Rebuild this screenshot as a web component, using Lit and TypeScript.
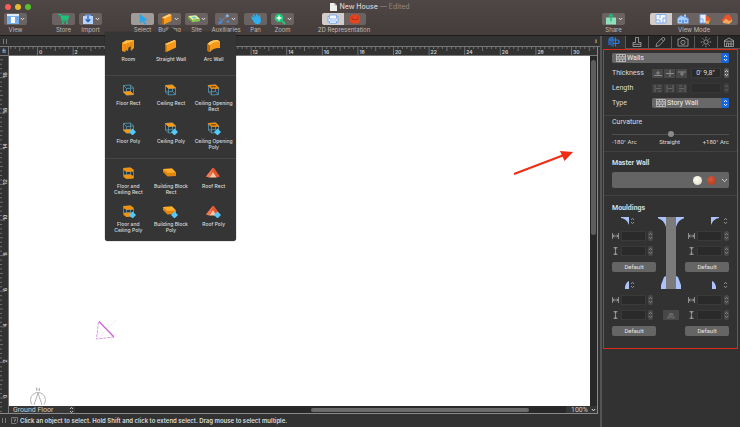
import { LitElement, html, svg, css, TemplateResult } from "lit";
import { customElement, state } from "lit/decorators.js";
import { classMap } from "lit/directives/class-map.js";

const icon = (w: number, h: number, body: unknown, cls = "") =>
  html`<svg class=${cls} width=${w} height=${h} viewBox="0 0 ${w} ${h}" fill="none" aria-hidden="true">${body}</svg>`;

const TOP = "M1 1.5L8 1L11 4L4 4.5Z";
const BOTTOM = "M1 8L8 7.5L11 10.5L4 11Z";
const wire = svg`<path d="M1 1.5L8 1L11 4L4 4.5Z M1 8L8 7.5L11 10.5L4 11Z M1 1.5V8 M8 1V7.5 M11 4V10.5 M4 4.5V11" stroke="#559db9" stroke-width=".8"/>`;
const diamond = svg`<path d="M11.5 7.5L15 11L11.5 14.5L8 11Z" fill="#55c8fa"/>`;

const glyphs: Record<string, unknown> = {
  room: svg`<path d="M1 4L5 1.5L13 1V9L10 12V7L7 9V12L5 11L4 13L1 12Z" fill="#f39412"/><path d="M1 4L5 1.5L13 1L10 3L7 4L4 5Z" fill="#ffc04d"/><path d="M4 5V12.5M7 4V11M10 3V11" stroke="#cf7d12" stroke-width=".8"/>`,
  straight: svg`<path d="M2 5L11.5 1L13 2V8.5L3.5 13L2 12Z" fill="#f8981a"/><path d="M2 5L11.5 1L13 2L3.5 6Z" fill="#ffc861"/><path d="M2 5L3.5 6V13L2 12Z" fill="#b4670b"/>`,
  arc: svg`<path d="M1.5 5Q5 .8 11.5 1L14 2.5V9Q7.5 8.5 4 13L1.5 12Z" fill="#f8981a"/><path d="M1.5 5Q5 .8 11.5 1L14 2.5Q7.5 2 4 6.5Z" fill="#ffc861"/><path d="M1.5 5L4 6.5V13L1.5 12Z" fill="#c06f0d"/>`,
  floor: svg`${wire}<path d=${BOTTOM} fill="#f59a16" stroke="#f59a16" stroke-width=".6"/>`,
  ceiling: svg`${wire}<path d=${TOP} fill="#f59a16" stroke="#f59a16" stroke-width=".6"/>`,
  opening: svg`${wire}<path d="M1.5 1.7L8 1.2L10.5 3.8L4 4.3Z" stroke="#f28d10" stroke-width="1.5" fill="#623d12"/>`,
  both: svg`${wire}<path d="M1 1L8 .5L11 2.5V4.5L4 5L1 3Z M1 8L8 7.5L11 9V11.5L4 12L1 10Z" fill="#f0920f"/>`,
  block: svg`<path d="M0 3L9 2.5L13 6.5V10L4.5 10.5L0 6Z" fill="#e0850d"/><path d="M0 3L9 2.5L13 6.5L4.5 7Z" fill="#ffae2c"/>`,
  roof: svg`<path d="M0 10.5L6.5 2L8 2L14 10.5L10.5 11.5L7 7L3.5 11.5Z" fill="#e2532e"/><path d="M7 2L3.5 11.5L0 10.5Z" fill="#f47a50"/><path d="M3.5 11.5L7 6L10.5 11.5Z" fill="#ffc7a5"/>`,
};
const solid = ["room", "straight", "arc", "block", "roof"];

const brick = icon(10, 8, svg`<path d="M.5 .5H9.5V7.5H.5Z M.5 2.8H9.5 M.5 5.2H9.5 M3.5 .5V2.8 M6.5 .5V2.8 M2 2.8V5.2 M5 2.8V5.2 M8 2.8V5.2 M3.5 5.2V7.5 M6.5 5.2V7.5" stroke="#d2d2d2" stroke-width=".7"/>`);
const updown = icon(5, 8, svg`<path d="M1 3L2.5 1.3L4 3M1 5L2.5 6.7L4 5" stroke="currentColor" stroke-width=".9"/>`);
const chevron = icon(5, 4, svg`<path d="M.8 1L2.5 2.8L4.2 1" stroke="#e4e2e1" stroke-width="1"/>`);
const grip = icon(4, 5, svg`<path d="M.5 0V5M3.5 0V5" stroke="#8c8c8c" stroke-width=".8"/>`);

const tools: Record<string, unknown> = {
  view: svg`<path d="M1 1H13V11H1Z" fill="#79b0ec"/><path d="M1 1H13V3H1Z" fill="#d9ecff"/><path d="M5 4H9V10H5Z" fill="#fff"/><path d="M2 4.5H4M10 4.5H12M2 6.5H4M10 6.5H12" stroke="#5c9bdf" stroke-width=".8"/>`,
  store: svg`<path d="M1 1.5H3.5L5.5 8H11" stroke="#1fc07c" stroke-width="1.2"/><path d="M3.5 2.5H12.5L11 7.3H5Z" fill="#1fc07c"/><circle cx="6" cy="10" r="1.1" fill="#1fc07c"/><circle cx="10" cy="10" r="1.1" fill="#1fc07c"/>`,
  import: svg`<path d="M2 3H12V11H2Z" fill="#b9d5fb"/><path d="M4 1.5H10V3H4Z" fill="#6fa4ee"/><path d="M7 2.5V8.5M4.7 6.3L7 8.7L9.3 6.3" stroke="#2a62c4" stroke-width="1.3"/>`,
  select: svg`<path d="M3.5 .8L12 7.2L8.2 7.5L10 11L8.3 11.6L6.6 8.3L3.8 10.5Z" fill="#2ba5ea"/>`,
  building: svg`<path d="M2 4.5L9.5 1L11.5 2.2V8L4 11.5L2 10.3Z" fill="#f59a1c"/><path d="M2 4.5L9.5 1L11.5 2.2L4 5.7Z" fill="#ffd078"/><path d="M2 4.5L4 5.7V11.5L2 10.3Z" fill="#b8690d"/>`,
  site: svg`<path d="M1 3L9 2.3L13 6L5 7Z" fill="#eff1a0"/><path d="M1 3L5 7V9.3L1 5.2Z" fill="#6fa83b"/><path d="M5 7L13 6V8.3L5 9.3Z" fill="#86c94c"/><path d="M4 4L8 3.6L10 5.5L6.5 5.8Z" fill="#65ccd1"/>`,
  aux: svg`<path d="M2.5 10L10.5 2.5M3 5L5.5 9.5" stroke="#5a95dc" stroke-width="1.1" stroke-dasharray="1.6 .8"/><circle cx="10.3" cy="2.7" r="1.5" fill="#86b8f2"/><circle cx="3" cy="9.5" r="1.6" fill="#4a8be0"/><circle cx="11" cy="8.5" r="1.3" fill="#4a8be0"/>`,
  pan: svg`<path d="M2 4L3.2 3.3L5.5 5.2L3.8 1.8L5 1.2L7.2 4.2L6.7 1L8 .8L9.3 4.2L9.8 2L11 2.2L12 8Q11.5 11 8.5 11.3Q5.5 11 4.5 8.5Z" fill="#2fb0ee"/>`,
  zoom: svg`<circle cx="6" cy="5" r="4.3" fill="#1fca78"/><path d="M9 8L12 11" stroke="#1fca78" stroke-width="1.8"/><path d="M6 2.6V7.4M3.6 5H8.4" stroke="#fff" stroke-width="1.3"/>`,
  chairBlue: svg`<path d="M3.5 2H10.5V3.5H12V9H10.5V10.3H3.5V9H2V3.5H3.5Z" fill="#f4f8ff" stroke="#7fabf0" stroke-width="1"/><path d="M3.5 4V6H10.5V4M3.5 10V8H10.5V10" stroke="#7fabf0" stroke-width=".8"/>`,
  chairRed: svg`<path d="M3.5 1.5H10.5V3H12V9.5H10.5V10.5H3.5V9.5H2V3H3.5Z" fill="#e5441f"/><path d="M4 3.5V6.5H10V3.5" stroke="#a82f14" stroke-width=".8"/>`,
  share: svg`<path d="M2 4.5H12V11.5H2Z" fill="#8fe0bd"/><path d="M7 8.5V1.5M4.8 3.6L7 1.3L9.2 3.6" stroke="#1fb877" stroke-width="1.4"/>`,
  plan: svg`<path d="M2 1.5H12V10H2Z M6 1.5V5M2 7H6V10M9 10V5H12" fill="#f3f8ff" stroke="#84aff0" stroke-width="1"/>`,
  house: svg`<path d="M1.5 5.5L5 2.5L8 3.5V1.5H10V4L12.5 5.5V10.5H1.5Z" fill="#a8cdfb"/><path d="M1.5 5.5L5 2.5L12.5 5.5" stroke="#5f99e8"/><path d="M3 7H5V9H3ZM9 7H11V9H9ZM6 7H8V10.5H6Z" fill="#5f99e8"/>`,
  split: svg`<path d="M2 1.5H8V10H2Z M2 6H5V10" fill="#e3efff" stroke="#76a8f0" stroke-width="1"/><path d="M8 2L13 6L10 10H8Z" fill="#e8592a"/><path d="M8 8L12 7.5L10.5 11L8 10.8Z" fill="#f3a34e"/>`,
  model: svg`<path d="M1.5 7L6 2L9.5 1.5L12.5 6.5L9 8L6 5.5L3 9Z" fill="#e9542a"/><path d="M3 8.5L6 5.5L9 8L12 6.8V8.5L9 11L3 10Z" fill="#f7a756"/>`,
};

const tabs: [string, unknown][] = [
  ["Element", svg`<path d="M2 9V4Q2 1.5 6 1.5V10.5M4 2.5V9.5M8.5 1.5V10.5M2 4H11L12.5 6L11 7.5H6" stroke="#2a7de8" stroke-width="1.1"/>`],
  ["Material", svg`<path d="M5.5 1.5H8.5V6.5H11V10.5H3V6.5H5.5ZM3 8.3H11" stroke="#a9a9a9" stroke-width=".8"/>`],
  ["Edit", svg`<path d="M3 10.5L3.6 7.8L9.3 1.8Q10.4 1 11.4 2Q12.2 3 11.5 4L5.8 9.9ZM8.3 3L10.6 5.2" stroke="#a9a9a9" stroke-width=".8"/>`],
  ["Camera", svg`<path d="M2 3H4L5.2 1.5H8.8L10 3H12V10H2Z" stroke="#a9a9a9" stroke-width=".8"/><circle cx="7" cy="6.4" r="2.1" stroke="#a9a9a9" stroke-width=".8"/>`],
  ["Light", svg`<circle cx="7" cy="6" r="2.2" stroke="#a9a9a9" stroke-width=".8"/><path d="M7 .8V2.4M7 9.6V11.2M1.8 6H3.4M10.6 6H12.2M3.3 2.3L4.5 3.5M9.5 8.5L10.7 9.7M3.3 9.7L4.5 8.5M9.5 3.5L10.7 2.3" stroke="#a9a9a9" stroke-width=".8"/>`],
  ["Building", svg`<path d="M2 5L7 2L12 5M2.5 5V10.5H11.5V5M2 5.2H12M4.5 10.5V7H6.5V10.5M8 7H10V9H8Z" stroke="#a9a9a9" stroke-width=".8"/>`],
];

interface Entry { label: string[]; glyph: string; poly?: boolean }
const sections: Entry[][][] = [
  [[{ label: ["Room"], glyph: "room" }, { label: ["Straight Wall"], glyph: "straight" }, { label: ["Arc Wall"], glyph: "arc" }]],
  [
    [{ label: ["Floor Rect"], glyph: "floor" }, { label: ["Ceiling Rect"], glyph: "ceiling" }, { label: ["Ceiling Opening", "Rect"], glyph: "opening" }],
    [{ label: ["Floor Poly"], glyph: "floor", poly: true }, { label: ["Ceiling Poly"], glyph: "ceiling", poly: true }, { label: ["Ceiling Opening", "Poly"], glyph: "opening", poly: true }],
  ],
  [
    [{ label: ["Floor and", "Ceiling Rect"], glyph: "both" }, { label: ["Building Block", "Rect"], glyph: "block" }, { label: ["Roof Rect"], glyph: "roof" }],
    [{ label: ["Floor and", "Ceiling Poly"], glyph: "both", poly: true }, { label: ["Building Block", "Poly"], glyph: "block", poly: true }, { label: ["Roof Poly"], glyph: "roof", poly: true }],
  ],
];

// Distance between two whole units on the rulers, and the room the fixed bars take.
const UNIT = 17.8;
const SIDE_BARS = 152;
const STACKED_BARS = 70;

@customElement("app-root")
export class AppRoot extends LitElement {
  @state() private tool = "Select";
  @state() private view = { w: window.innerWidth, h: window.innerHeight };

  private onResize = () => {
    this.view = { w: window.innerWidth, h: window.innerHeight };
  };

  connectedCallback() {
    super.connectedCallback();
    window.addEventListener("resize", this.onResize);
  }

  disconnectedCallback() {
    window.removeEventListener("resize", this.onResize);
    super.disconnectedCallback();
  }

  static styles = css`
    :host { display: flex; flex-direction: column; min-height: 100vh; background: #323232; color: #dcdcdc;
      font-family: Inter, Roboto, "Liberation Sans", sans-serif; font-size: 7px; line-height: 8px; }
    * { box-sizing: border-box; }
    svg { display: block; flex: none; }
    button, input, select { font: inherit; color: inherit; margin: 0; padding: 0; border: 0; background: none; border-radius: 0; min-width: 0; outline: none; }
    select { appearance: none; }

    header { background: linear-gradient(#4f4745, #443d3b); height: 36px; border-bottom: 1px solid #1c1a1a; }
    .title { display: grid; grid-template-columns: 1fr auto 1fr; height: 13px; padding: 0 5px; align-items: center; }
    .lights { display: flex; gap: 4px; }
    .light { width: 6px; height: 6px; border-radius: 3px; background: #fb5b57; }
    .light.min { background: #e5bb2d; }
    .light.max { background: #55c22d; }
    .title h1 { display: flex; align-items: center; gap: 2px; margin: 0; font-size: 7px; font-weight: 500; color: #d6d1cf; }
    .edited { color: #8f8886; font-weight: 400; }
    .toolbar { display: flex; gap: 4px; padding: 0 2px 0 4px; font-size: 6px; color: #c0bab8; }
    .tool { display: flex; flex-direction: column; align-items: center; gap: 1px; width: 23px; white-space: nowrap; }
    .tool.aux { width: 28px; }
    .tool.rep { width: 50px; }
    .tool.mode { width: 88px; }
    .keys { display: flex; border-radius: 2px; overflow: hidden; }
    .key { display: flex; align-items: center; justify-content: center; width: 23px; height: 12px; background: #6a6361; }
    .rep .key, .mode .key { width: 22px; }
    .key.on { background: #a19b99; }
    .rep .key.on, .mode .key.on { background: #d2cccb; }
    .space { width: 17px; }
    .space.wide { width: 21px; }
    .grow { flex: 1; }

    .body { flex: 1; display: grid; grid-template-columns: minmax(0, 1fr) 138px; }
    .work { display: flex; flex-direction: column; border-right: 2px solid #555; min-width: 0; }
    .infobar { display: flex; align-items: center; justify-content: space-between; height: 11px; padding: 0 3px; border-bottom: 1px solid #777; font-family: "Liberation Serif", serif; font-weight: 700; color: #aaa; }
    .stage { flex: 1; display: grid; grid-template-columns: 9px minmax(0, 1fr) 7px; grid-template-rows: 9px minmax(0, 1fr) 7px; margin-right: 2px; border-right: 1px solid #8a8a8a; border-bottom: 1px solid #8a8a8a; }
    .corner { display: flex; align-items: center; justify-content: center; font-size: 5px; line-height: 8px; font-weight: 700; border-right: 1px solid #777; border-bottom: 1px solid #777; color: #bbb; }
    .hruler { grid-column: 2 / 4; overflow: hidden; }
    .vruler { overflow: hidden; border-right: 1px solid #777; grid-row: 2 / 4; display: flex; align-items: flex-end; }
    .ruler text { font-size: 5px; font-weight: 600; fill: #d0d0d0; }
    .canvas { background: #fff; position: relative; overflow: hidden; }
    .camera { position: absolute; left: 86px; top: 263px; }
    .compass { position: absolute; left: 19px; bottom: 0; }
    .arrow { position: absolute; right: 16px; top: 91px; }
    .vscroll { background: #282828; padding: 4px 1px; }
    .vthumb { height: 175px; border-radius: 3px; background: #5e5e5e; }
    .foot { grid-column: 2 / 4; display: flex; align-items: center; background: #282828; color: #cfcfcf; font-family: Roboto, Inter, sans-serif; }
    .floor { display: flex; align-items: center; width: 66px; height: 7px; padding: 0 1px 0 4px; background: #363636; }
    .foot select { flex: 1; height: 8px; line-height: 8px; }
    .track { flex: 1; display: flex; justify-content: flex-end; padding-right: 37px; }
    .hthumb { width: 48%; height: 4px; border-radius: 2px; background: #6b6b6b; }
    .percent { display: flex; align-items: center; width: 31px; height: 7px; padding: 0 1px 0 5px; background: #363636; }
    .status { display: flex; align-items: center; gap: 5px; height: 13px; padding: 0 2px; font-size: 6px; font-weight: 600; }
    .hint { display: flex; align-items: center; gap: 2px; }

    .popover { position: absolute; left: 105px; top: 32px; width: 131px; height: 209px; background: #353535; border-radius: 0 0 3px 3px; box-shadow: 0 0 1px #111; font-size: 5px; line-height: 6px; font-weight: 500; z-index: 3; padding-top: 7px; }
    .tip { position: absolute; left: 60px; top: -5px; }
    .section + .section { border-top: 1px solid #474747; margin-top: 4px; padding-top: 7px; }
    .row { display: grid; grid-template-columns: repeat(3, 1fr); padding: 0 1px 0 2px; height: 33px; }
    .section:first-of-type .row { height: 32px; }
    .row + .row { margin-top: 5px; }
    .entry { display: flex; flex-direction: column; align-items: center; gap: 3px; line-height: 6px; white-space: nowrap; }
    .entry span { display: block; }

    .tabs { display: grid; grid-template-columns: repeat(6, 1fr); height: 12px; background: #262626; }
    .tab { display: flex; align-items: center; justify-content: center; border-left: 1px solid #5a5a5a; border-bottom: 1px solid #5a5a5a; }
    .tab.on { border-color: transparent; background: #323232; }
    .panel { margin: 1px 2px 0 1px; border: 1px solid #e02a18; min-height: 300px; font-family: Roboto, Inter, sans-serif; }
    .group { padding: 0 8px; display: flex; flex-direction: column; }
    .group + .group { border-top: 1px solid #424242; }
    .props { padding-top: 3px; padding-bottom: 7px; gap: 5px; }
    .line { display: grid; grid-template-columns: 40px 1fr; align-items: center; height: 10px; }
    .ctl { display: flex; align-items: center; justify-content: space-between; }
    .picker { display: flex; align-items: center; height: 10px; padding-left: 4px; gap: 1px; border-radius: 2px; background: #686868; overflow: hidden; color: #eee; }
    .picker select { flex: 1; height: 10px; line-height: 10px; }
    .blue { display: flex; align-items: center; justify-content: center; width: 8px; height: 10px; background: #1565df; color: #fff; }
    .seg { display: flex; gap: 1px; }
    .seg button { display: flex; align-items: center; justify-content: center; width: 11px; height: 9px; background: #484848; }
    .dim { opacity: .6; }
    .field { width: 30px; height: 10px; background: #2a2a2a; border: 1px solid #3a3a3a; text-align: center; }
    .field.small { width: 25px; }
    .step { display: flex; align-items: center; justify-content: center; width: 5px; height: 10px; background: #595959; border-radius: 2px; color: #d8d8d8; }
    .step.off { background: #484848; color: #808080; }
    .curv { padding-top: 2px; padding-bottom: 5px; }
    .range { appearance: none; display: block; width: 100%; height: 6px; margin: 5px 0 1px; background: linear-gradient(#505050, #505050) center / 100% 1px no-repeat; }
    .range::-webkit-slider-thumb { appearance: none; width: 6px; height: 6px; border-radius: 3px; background: #8b8b8b; }
    .ends { display: flex; justify-content: space-between; font-size: 6px; }
    .strong { margin: 0; font-size: 7px; line-height: 8px; font-weight: 700; }
    .master { padding-top: 7px; padding-bottom: 7px; gap: 5px; }
    .balls { display: flex; align-items: center; justify-content: flex-end; gap: 5px; height: 16px; width: 100%; padding-right: 1px; border-radius: 2px; background: #646464; }
    .ball { width: 9px; height: 9px; border-radius: 5px; background: radial-gradient(circle at 40% 35%, #fffff2, #d9d7c4); }
    .ball.red { background: radial-gradient(circle at 40% 35%, #d65a3c, #a5351c); }
    .mould { padding-top: 8px; gap: 4px; }
    .mgrid { display: grid; grid-template-columns: 44px 1fr 44px; }
    .side { display: flex; flex-direction: column; gap: 8px; }
    .block { display: flex; flex-direction: column; gap: 5px; }
    .shape { display: flex; align-items: center; gap: 1px; height: 10px; padding-left: 9px; color: #999; }
    .right .shape { padding: 0 1px 0 0; justify-content: flex-end; gap: 4px; }
    .dimrow { display: flex; align-items: center; gap: 2px; height: 10px; }
    .right .dimrow { justify-content: flex-end; }
    .default { height: 10px; width: 44px; margin-top: 1px; background: #656565; border-radius: 2px; color: #e4e4e4; text-align: center; font-size: 6px; line-height: 10px; }
    .middle { display: flex; flex-direction: column; align-items: center; justify-content: space-between; padding: 1px 0 16px; }
    .mirror { display: flex; align-items: center; justify-content: center; width: 16px; height: 10px; background: #484848; border-radius: 1px; }
  `;

  private key(label: string, glyph: string, menu = false, on = false) {
    return html`<button class=${classMap({ key: true, on })} aria-label=${label} @click=${() => (this.tool = label)}>
      ${icon(14, 12, tools[glyph])}${menu ? chevron : ""}
    </button>`;
  }

  private toolItem(label: string, glyph: string, menu = false, extra = "") {
    return html`<div class="tool ${extra}"><div class="keys">${this.key(label, glyph, menu, this.tool === label)}</div><span>${label}</span></div>`;
  }

  private hRuler() {
    const width = this.view.w - SIDE_BARS;
    const marks: unknown[] = [];
    for (let q = -6; ; q++) {
      const x = 28.5 + (q * UNIT) / 4;
      if (x > width) break;
      const major = q % 8 === 0;
      marks.push(svg`<path d="M${x} 0V${major ? 8 : q % 4 === 0 ? 4 : 2}" stroke="#8d8d8d" stroke-width=".7"/>`);
      if (major && x < width - 8) marks.push(svg`<text x=${x + 1.5} y="7">${q / 4}</text>`);
    }
    return html`<svg class="ruler" width=${width} height="9"><path d="M0 8.5H${width}" stroke="#777"/>${marks}</svg>`;
  }

  private vRuler() {
    const height = this.view.h - STACKED_BARS;
    const marks: unknown[] = [];
    for (let q = -3; ; q++) {
      const y = height - 15 - (q * UNIT) / 4;
      if (y < 0) break;
      const major = q % 8 === 0;
      marks.push(svg`<path d="M0 ${y}H${major ? 5 : q % 4 === 0 ? 3 : 2}" stroke="#8d8d8d" stroke-width=".7"/>`);
      if (major && y > 8) marks.push(svg`<text transform="translate(7 ${y}) rotate(-90)">${q / 4}</text>`);
    }
    return html`<svg class="ruler" width="8" height=${height}>${marks}</svg>`;
  }

  private popover() {
    return html`<nav class="popover" aria-label="Building tools">
      ${icon(12, 5, svg`<path d="M0 5L6 0L12 5Z" fill="#353535"/>`, "tip")}
      ${sections.map((rows) => html`<div class="section">${rows.map((row) => html`<div class="row">
        ${row.map((e) => html`<button class="entry">
          ${icon(15, 14, svg`<g transform=${solid.includes(e.glyph) ? "translate(0 0)" : "translate(1.5 1)"}>${glyphs[e.glyph]}</g>${e.poly ? diamond : ""}`)}
          <span>${e.label.map((l) => html`<span>${l}</span>`)}</span>
        </button>`)}</div>`)}</div>`)}
    </nav>`;
  }

  private seg(paths: string[], names: string[]) {
    return html`<div class="seg">${paths.map((p, i) => html`<button aria-label=${names[i]}>${icon(8, 7, svg`<path d=${p} stroke="#8a8a8a" stroke-width="1"/>`)}</button>`)}</div>`;
  }

  private dims(where: string, axis: string) {
    const path = axis === "width" ? "M.5 1V7M6.5 1V7M.5 4H6.5M2.3 2.6L.8 4L2.3 5.4M4.7 2.6L6.2 4L4.7 5.4" : "M1.5 .5H5.5M1.5 7.5H5.5M3.5 .5V7.5M2.3 2.3L3.5 1L4.7 2.3M2.3 5.7L3.5 7L4.7 5.7";
    return html`<div class="dimrow">${icon(7, 8, svg`<path d=${path} stroke="#b0b0b0" stroke-width=".7"/>`)}
      <input class="field small" aria-label="${where} ${axis}"><button class="step off" aria-label="Step ${where} ${axis}">${updown}</button></div>`;
  }

  private block(where: string, shape: TemplateResult) {
    return html`<div class="block"><div class="shape">${shape}${updown}</div>
      ${this.dims(where, "width")}${this.dims(where, "height")}<button class="default">Default</button></div>`;
  }

  private inspector() {
    const blue = "#abc2fa";
    return html`<aside>
      <div class="tabs">${tabs.map(([n, g], i) => html`<button class=${classMap({ tab: true, on: i === 0 })} aria-label=${n}>${icon(14, 12, g)}</button>`)}</div>
      <div class="panel">
        <div class="group props">
          <div class="picker">${brick}<select aria-label="Element kind"><option>Walls</option></select><span class="blue">${updown}</span></div>
          <div class="line"><label for="thick">Thickness</label><div class="ctl">
            ${this.seg(["M0 5.5H8M4 1V5M2 3H6", "M0 3.5H8M4 0V7", "M0 2H8M4 2V6M2 4H6"], ["Above", "Centre", "Below"])}
            <input id="thick" class="field" .value=${"0' 9,8\""}><button class="step" aria-label="Step thickness">${updown}</button></div></div>
          <div class="line"><label for="len">Length</label><div class="ctl dim">
            ${this.seg(["M1 0V7M2 3.5H7M7 1H4M7 6H4", "M1 0V7M7 0V7M2 3.5H6", "M7 0V7M1 3.5H6M1 1H4M1 6H4"], ["Start", "Both", "End"])}
            <input id="len" class="field"><button class="step off" aria-label="Step length">${updown}</button></div></div>
          <div class="line"><label for="type">Type</label><div class="picker">${brick}<select id="type"><option>Story Wall</option></select><span class="blue">${updown}</span></div></div>
        </div>
        <div class="group curv">
          <label for="curve">Curvature</label>
          <input id="curve" class="range" type="range" min="-180" max="180" value="0">
          <div class="ends"><span>-180° Arc</span><span>Straight</span><span>+180° Arc</span></div>
        </div>
        <div class="group master">
          <h2 class="strong">Master Wall</h2>
          <button class="balls" aria-label="Master wall materials"><span class="ball"></span><span class="ball red"></span>${icon(7, 5, svg`<path d="M1 1L3.5 3.7L6 1" stroke="#ddd" stroke-width=".9"/>`)}</button>
        </div>
        <div class="group mould">
          <h2 class="strong">Mouldings</h2>
          <div class="mgrid">
            <div class="side">
              ${this.block("Top left", icon(8, 8, svg`<path d="M0 0H8V8Q6 2 0 1Z" fill=${blue}/>`))}
              ${this.block("Bottom left", icon(8, 8, svg`<path d="M8 0V8H4V6Q5 1 8 0Z" fill=${blue}/>`))}
            </div>
            <div class="middle">
              ${icon(26, 72, svg`<path d="M8 0H18V72H8Z" fill="#7b7b7b"/><path d="M0 0H8V10Q6 3 0 1.2Z M26 0H18V10Q20 3 26 1.2Z M8 59V72H3V68L6 60Z M18 59V72H23V68L20 60Z" fill=${blue}/>`)}
              <button class="mirror" aria-label="Mirror mouldings">${icon(8, 7, svg`<path d="M3.2 1V6H.5ZM4.8 1V6H7.5Z" stroke="#777" stroke-width=".8"/>`)}</button>
            </div>
            <div class="side right">
              ${this.block("Top right", icon(8, 8, svg`<path d="M8 0H0V8Q2 2 8 1Z" fill=${blue}/>`))}
              ${this.block("Bottom right", icon(8, 8, svg`<path d="M1 0V8H5V6Q4 1 1 0Z" fill=${blue}/>`))}
            </div>
          </div>
        </div>
      </div>
    </aside>`;
  }

  render() {
    return html`
      <header>
        <div class="title">
          <div class="lights"><span class="light"></span><span class="light min"></span><span class="light max"></span></div>
          <h1>${icon(7, 8, svg`<path d="M0 0H4.5L7 2.5V8H0Z" fill="#f1efee"/><path d="M4.5 0V2.5H7Z" fill="#aaa"/>`)}<span>New House</span><span class="edited">— Edited</span></h1>
        </div>
        <div class="toolbar">
          ${this.toolItem("View", "view", true)}<span class="space"></span>
          ${this.toolItem("Store", "store")}${this.toolItem("Import", "import", true)}<span class="space wide"></span>
          ${this.toolItem("Select", "select")}${this.toolItem("Building", "building", true)}${this.toolItem("Site", "site", true)}
          ${this.toolItem("Auxiliaries", "aux", true, "aux")}${this.toolItem("Pan", "pan")}${this.toolItem("Zoom", "zoom", true)}<span class="space"></span>
          <div class="tool rep"><div class="keys">${this.key("Plan symbols", "chairBlue", false, true)}${this.key("Rendered symbols", "chairRed")}</div><span>2D Representation</span></div>
          <span class="grow"></span>
          ${this.toolItem("Share", "share", true)}<span class="space"></span>
          <div class="tool mode"><div class="keys">${this.key("Plan", "plan", false, true)}${this.key("Elevation", "house")}${this.key("Split", "split")}${this.key("3D", "model")}</div><span>View Mode</span></div>
        </div>
      </header>
      ${this.popover()}
      <div class="body">
        <main class="work">
          <div class="infobar">${grip}<span>i</span></div>
          <div class="stage">
            <div class="corner">ft</div>
            <div class="hruler">${this.hRuler()}</div>
            <div class="vruler">${this.vRuler()}</div>
            <div class="canvas">
              ${icon(26, 26, svg`<path d="M4 2.5L19 18" stroke="#c95fd6" stroke-width="1.2"/><path d="M3.5 3L1.5 20L19 18" stroke="#d98be2" stroke-width=".9" stroke-dasharray="3 1"/><path d="M3 19L21 1" stroke="#e9c8ee" stroke-width=".6" stroke-dasharray="2 1"/>`, "camera")}
              ${icon(20, 19, svg`<path d="M4 17.5A7.5 7.5 0 1 1 16 17.5M10 6L6 18M10 6L14 18" stroke="#b4b4b4" stroke-width="1"/><path d="M8.5 4V.8L11.5 4V.8" stroke="#aaa" stroke-width=".8"/>`, "compass")}
              ${icon(64, 32, svg`<path d="M4 27L54 8" stroke="#f02c14" stroke-width="2"/><path d="M63 5L50 4L54.5 14Z" fill="#f02c14"/>`, "arrow")}
            </div>
            <div class="vscroll"><div class="vthumb"></div></div>
            <div class="foot">
              <div class="floor"><select aria-label="Story"><option>Ground Floor</option></select>${updown}</div>
              <div class="track"><div class="hthumb"></div></div>
              <div class="percent"><select aria-label="Zoom level"><option>100%</option></select>${chevron}</div>
            </div>
          </div>
          <div class="status">${grip}<div class="hint">${icon(7, 7, svg`<path d="M.5 .5H6.5V5L5 6.5H.5Z" stroke="#888" stroke-width=".8"/><path d="M2.5 2H4.5V3.5H3.5V5" stroke="#999" stroke-width=".7"/>`)}<span>Click an object to select. Hold Shift and click to extend select. Drag mouse to select multiple.</span></div></div>
        </main>
        ${this.inspector()}
      </div>`;
  }
}
